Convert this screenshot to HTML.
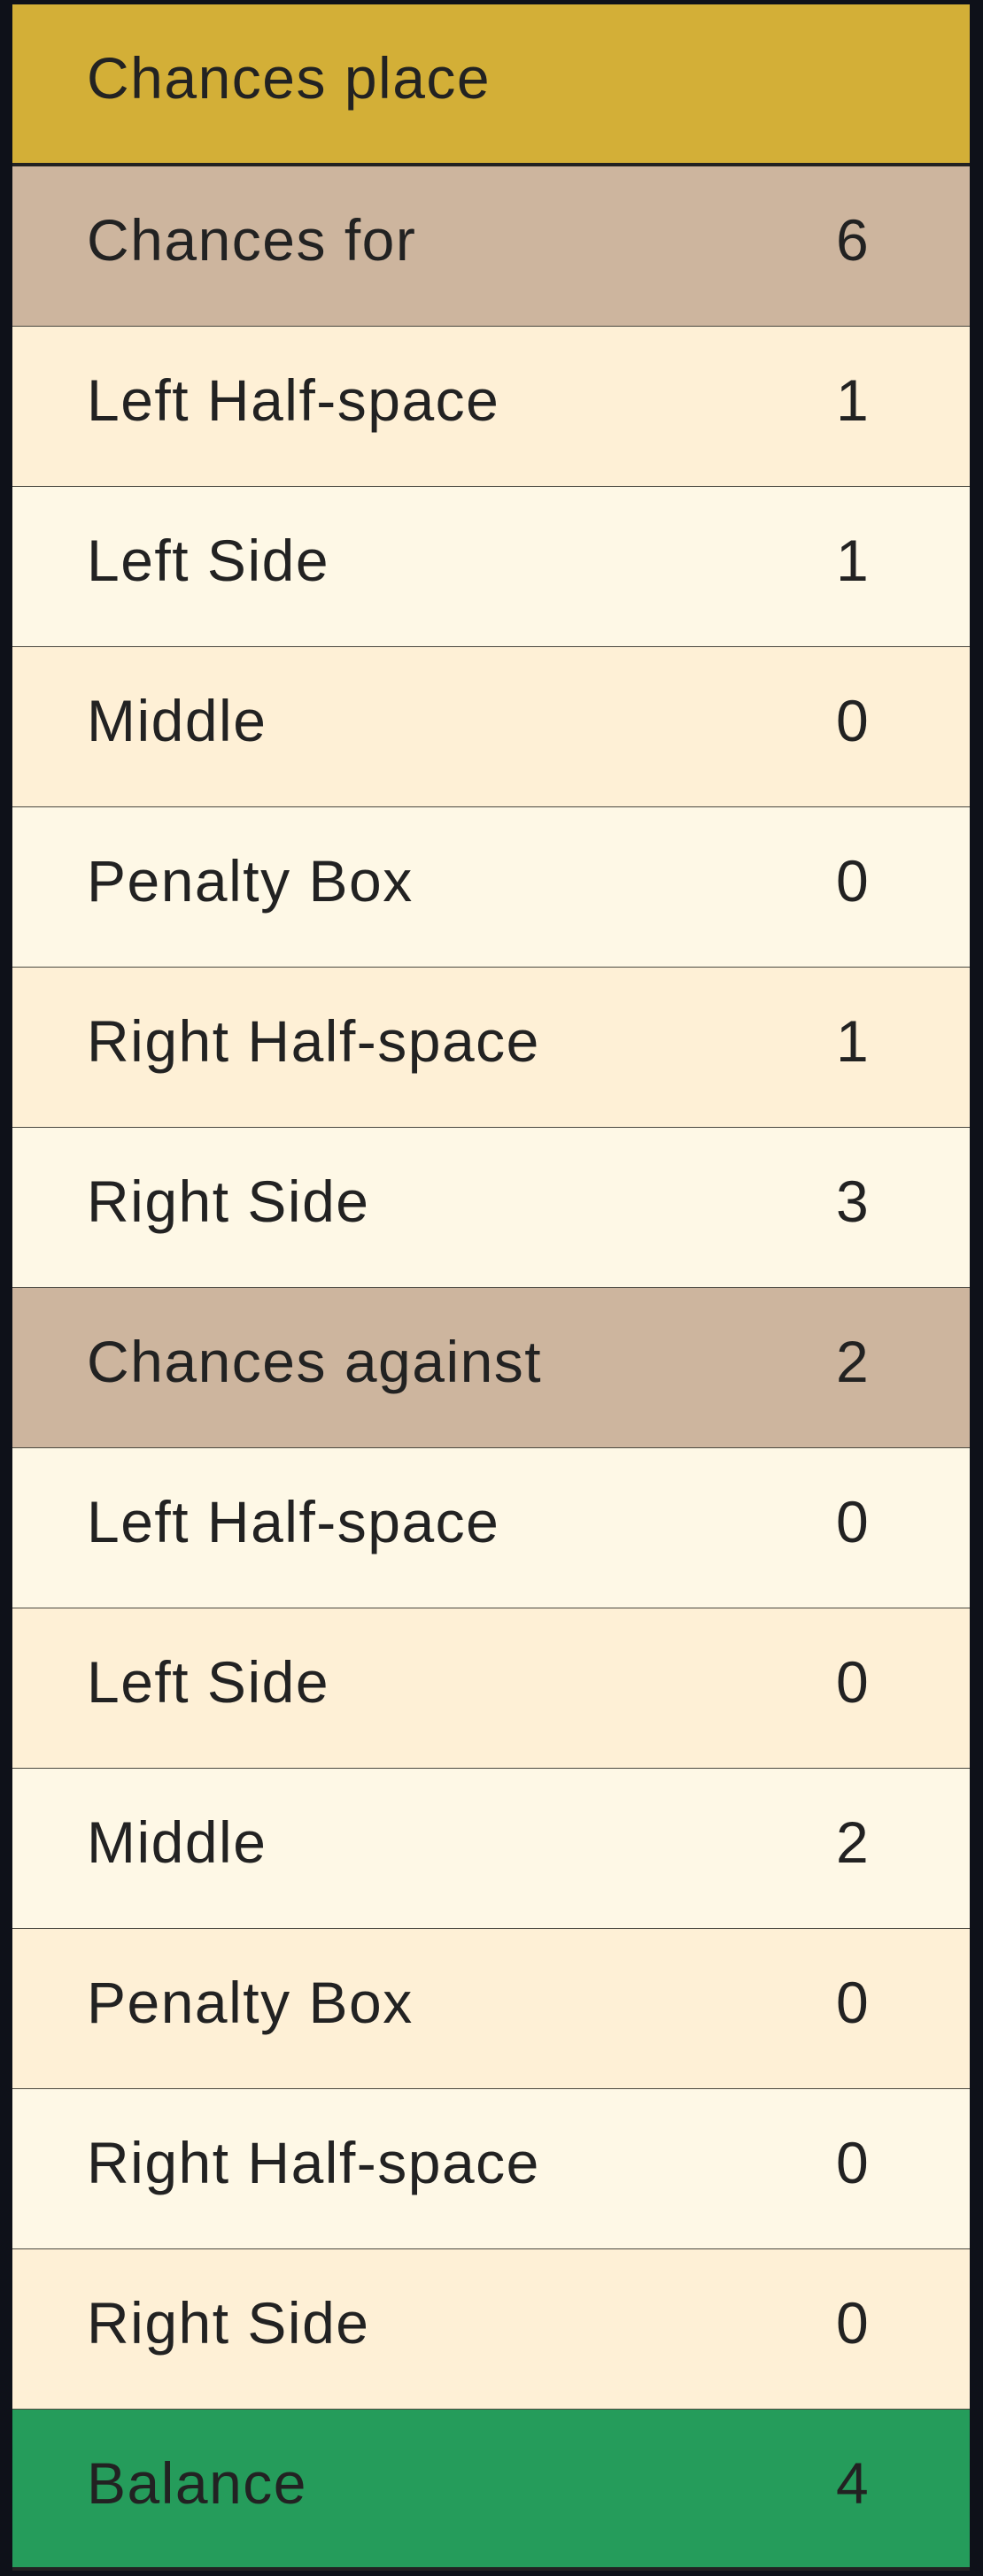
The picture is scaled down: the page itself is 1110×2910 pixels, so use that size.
<!DOCTYPE html>
<html><head><meta charset="utf-8"><style>
html,body{margin:0;padding:0;background:#0e1119;}
body{width:1110px;height:2910px;position:relative;overflow:hidden;font-family:"Liberation Sans",sans-serif;color:#222;}
.t{position:absolute;left:14px;top:5px;width:1081px;}
.r{height:180px;border-bottom:1px solid #4a4840;position:relative;box-sizing:content-box;}
.r span{position:absolute;top:49px;line-height:68px;font-size:66px;letter-spacing:1.5px;}
.r .l{left:84px;}
.r .n{left:930px;width:30px;text-align:center;letter-spacing:0;}
.h{background:#d3af37;height:179px;border-bottom:4px solid #222;}
.s{background:#cdb59e;}
.a{background:#fef0d6;}
.b{background:#fef8e6;}
.g{background:#259c5b;height:178px;border-bottom:4px solid #222;}
</style></head><body>
<div class="t">
<div class="r h"><span class="l">Chances place</span></div>
<div class="r s"><span class="l">Chances for</span><span class="n">6</span></div>
<div class="r a"><span class="l">Left Half-space</span><span class="n">1</span></div>
<div class="r b"><span class="l">Left Side</span><span class="n">1</span></div>
<div class="r a"><span class="l">Middle</span><span class="n">0</span></div>
<div class="r b"><span class="l">Penalty Box</span><span class="n">0</span></div>
<div class="r a"><span class="l">Right Half-space</span><span class="n">1</span></div>
<div class="r b"><span class="l">Right Side</span><span class="n">3</span></div>
<div class="r s"><span class="l">Chances against</span><span class="n">2</span></div>
<div class="r b"><span class="l">Left Half-space</span><span class="n">0</span></div>
<div class="r a"><span class="l">Left Side</span><span class="n">0</span></div>
<div class="r b"><span class="l">Middle</span><span class="n">2</span></div>
<div class="r a"><span class="l">Penalty Box</span><span class="n">0</span></div>
<div class="r b"><span class="l">Right Half-space</span><span class="n">0</span></div>
<div class="r a"><span class="l">Right Side</span><span class="n">0</span></div>
<div class="r g"><span class="l">Balance</span><span class="n">4</span></div>
</div>
</body></html>
